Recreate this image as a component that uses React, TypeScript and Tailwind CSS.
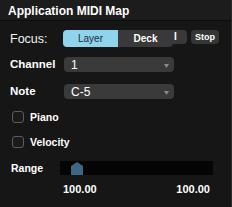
const font = { fontFamily: '"Liberation Sans", Arial, sans-serif' };

function Arrow() {
  return (
    <svg width="5" height="4" viewBox="0 0 5 4" className="mt-[2px]">
      <path d="M0 0 L5 0 L2.5 4 Z" fill="#8a8a8a" />
    </svg>
  );
}

function Select({ value }: { value: string }) {
  return (
    <div className="flex h-[15px] w-[110px] items-center justify-between rounded-[4px] bg-[#3a3a3a] pl-[7px] pr-[5px] text-[12px] leading-none text-white">
      <span>{value}</span>
      <Arrow />
    </div>
  );
}

function Checkbox({ label }: { label: string }) {
  return (
    <div className="flex items-center gap-[6px] pl-[12px]">
      <div className="h-[12px] w-[12px] rounded-[3px] border border-[#5c5c5c] bg-[#1a1a1a]" />
      <span className="text-[10.5px] font-bold leading-none text-white">{label}</span>
    </div>
  );
}

export default function App() {
  return (
    <div
      className="flex h-[207px] w-[232px] flex-col overflow-hidden border-r border-[#2b2b2b] bg-[#161616]"
      style={font}
    >
      <div className="flex h-[21px] shrink-0 items-center border-b border-[#0c0c0c] bg-[#1c1c1c] pl-[8px] pt-[2px] text-[12px] font-bold text-white">
        Application MIDI Map
      </div>

      <div className="mt-[9px] flex items-start pl-[10px]">
        <span className="w-[53px] pt-[3px] text-[12.5px] leading-none text-[#f2f2f2]">Focus:</span>
        <div className="flex items-start">
          <div className="flex h-[17px] w-[55px] items-center justify-center rounded-l-[4px] bg-[#8fd3ec] text-[10px] leading-none text-[#1d2b36]">
            Layer
          </div>
          <div className="flex h-[17px] w-[55px] items-center justify-center rounded-br-[4px] bg-[#393939] text-[10px] font-bold leading-none text-white">
            Deck
          </div>
          <div className="flex h-[14px] w-[14px] items-center rounded-r-[4px] bg-[#393939] pl-[1px] text-[10px] font-bold leading-none text-white">
            I
          </div>
        </div>
        <div className="ml-[4px] flex h-[14px] w-[28px] items-center justify-center rounded-[4px] bg-[#363636] text-[9px] font-bold leading-none text-white">
          Stop
        </div>
      </div>

      <div className="mt-[10px] flex items-center pl-[10px]">
        <span className="w-[54px] text-[11.5px] font-bold leading-none text-white">Channel</span>
        <Select value="1" />
      </div>

      <div className="mt-[12px] flex items-center pl-[10px]">
        <span className="w-[54px] text-[11.5px] font-bold leading-none text-white">Note</span>
        <Select value="C-5" />
      </div>

      <div className="mt-[12px] flex flex-col gap-[13px]">
        <Checkbox label="Piano" />
        <Checkbox label="Velocity" />
      </div>

      <div className="mt-[13px] flex items-center pl-[11px]">
        <span className="w-[49px] text-[10.5px] font-bold leading-none text-white">Range</span>
        <div className="relative h-[14px] w-[153px] bg-[#050505]">
          <svg width="12" height="13" viewBox="0 0 12 13" className="absolute bottom-0 left-[11px]">
            <path d="M6 0 L12 4 L12 13 L0 13 L0 4 Z" fill="#3f6783" />
          </svg>
        </div>
      </div>

      <div className="mt-[9px] flex w-[210px] justify-between pl-[63px] text-[11px] font-bold leading-none text-white">
        <span>100.00</span>
        <span>100.00</span>
      </div>
    </div>
  );
}
